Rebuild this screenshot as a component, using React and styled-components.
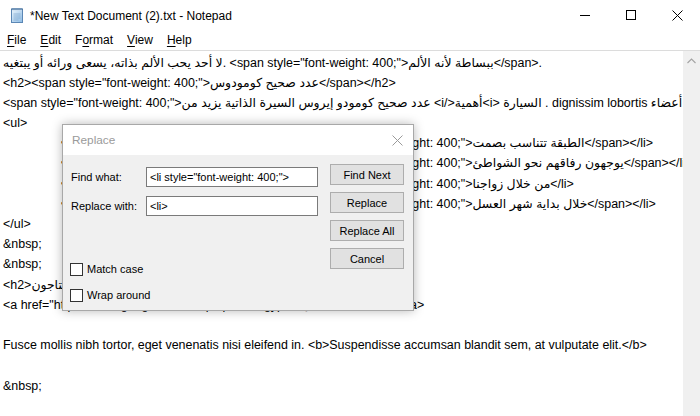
import React from 'react';
import styled, { createGlobalStyle } from 'styled-components';

const GlobalStyle = createGlobalStyle`
  html, body {
    margin: 0;
    padding: 0;
    background: #fff;
  }
  body {
    width: 700px;
    height: 416px;
    overflow: hidden;
    font-family: "Liberation Sans", "DejaVu Sans", Arial, sans-serif;
  }
`;

const Window = styled.div`
  position: relative;
  width: 700px;
  height: 416px;
  display: flex;
  flex-direction: column;
  background: #fff;
  overflow: hidden;
`;

const TitleBar = styled.div`
  height: 30px;
  display: flex;
  align-items: center;
  flex-shrink: 0;
`;

const AppIcon = styled.svg`
  width: 16px;
  height: 16px;
  margin: 0 5px 0 9px;
`;

const Title = styled.div`
  flex: 1;
  font-size: 12px;
  color: #000;
  margin-top: 1px;
`;

const Controls = styled.div`
  display: flex;
  height: 30px;
`;

const Control = styled.div`
  width: 46px;
  display: flex;
  align-items: center;
  justify-content: center;
`;

const MenuBar = styled.div`
  height: 20px;
  display: flex;
  align-items: center;
  flex-shrink: 0;
`;

const MenuItem = styled.div`
  padding: 0 7px;
  font-size: 12px;
  color: #000;
  & u {
    text-decoration: underline;
    text-underline-offset: 2px;
  }
`;

const Editor = styled.div`
  flex: 1;
  display: flex;
  border-top: 1px solid #dcdcdc;
  min-height: 0;
`;

const TextArea = styled.div`
  flex: 1;
  overflow: hidden;
  padding: 1.5px 0 0 3px;
  font-size: 12.45px;
  line-height: 20.2px;
  color: #000;
  white-space: pre;
`;

const Line = styled.div`
  height: 20.2px;
`;

const Rtl = styled.span`
  direction: rtl;
  unicode-bidi: isolate;
`;

const ListLine = styled.div`
  height: 20.2px;
  display: flex;
  padding-left: 58px;
`;

const Bullet = styled.span`
  flex-shrink: 0;
`;

const Hidden = styled.span`
  flex: 0 0 347px;
  overflow: hidden;
  display: flex;
  justify-content: flex-end;
`;

const ScrollBar = styled.div`
  width: 17px;
  background: #f0f0f0;
  display: flex;
  flex-direction: column;
  align-items: center;
  padding-top: 7px;
`;

const Dialog = styled.div`
  position: absolute;
  left: 62px;
  top: 124px;
  width: 352px;
  height: 187px;
  box-sizing: border-box;
  border: 1px solid #a8a8a8;
  box-shadow: 0 0 10px rgba(0, 0, 0, 0.28);
  display: flex;
  flex-direction: column;
  background: #f0f0f0;
  font-size: 11px;
  color: #000;
`;

const DialogTitle = styled.div`
  height: 30px;
  background: #fff;
  display: flex;
  align-items: center;
  justify-content: space-between;
  padding: 0 10px 0 9px;
  font-size: 11.8px;
  color: #9a9a9a;
`;

const DialogBody = styled.div`
  flex: 1;
  display: flex;
  padding: 0 9px 0 7px;
  gap: 12px;
`;

const Fields = styled.div`
  width: 248px;
  display: flex;
  flex-direction: column;
  padding-top: 12px;
`;

const FieldRow = styled.div`
  display: flex;
  align-items: center;
  height: 20px;
  margin-bottom: ${p => p.$gap || 0}px;
`;

const Label = styled.label`
  width: 75px;
  padding-left: 1px;
`;

const Input = styled.div`
  flex: 1;
  height: 20px;
  box-sizing: border-box;
  border: 1px solid #7a7a7a;
  background: #fff;
  padding: 0 3px;
  line-height: 18px;
  white-space: pre;
`;

const Checks = styled.div`
  margin-top: 46px;
  display: flex;
  flex-direction: column;
  gap: 12px;
`;

const CheckRow = styled.div`
  display: flex;
  align-items: center;
  height: 14px;
  gap: 4px;
`;

const Box = styled.span`
  width: 13px;
  height: 13px;
  box-sizing: border-box;
  border: 1px solid #333;
  background: #fff;
`;

const Buttons = styled.div`
  display: flex;
  flex-direction: column;
  gap: 7px;
  padding-top: 9px;
`;

const Button = styled.div`
  width: 74px;
  height: 21px;
  box-sizing: border-box;
  border: 1px solid #adadad;
  background: #e1e1e1;
  display: flex;
  align-items: center;
  justify-content: center;
`;

const li = (hidden, visible) => (
  <ListLine>
    <Bullet>•</Bullet>
    <Hidden><span>{hidden}</span></Hidden>
    <span>{visible}</span>
  </ListLine>
);

export default function App() {
  return (
    <Window>
      <GlobalStyle />
      <TitleBar>
        <AppIcon viewBox="0 0 16 16">
          <defs>
            <linearGradient id="pad" x1="0" y1="0" x2="1" y2="1">
              <stop offset="0" stopColor="#e9f4fc" />
              <stop offset="1" stopColor="#8dbbe4" />
            </linearGradient>
          </defs>
          <rect x="2.5" y="2.5" width="11" height="13" fill="url(#pad)" stroke="#5b87b5" />
          <rect x="2.5" y="1" width="11" height="2" fill="#3d6a99" />
          <path d="M4 1v3M6 1v3M8 1v3M10 1v3M12 1v3" stroke="#c9d9ea" strokeWidth="0.8" />
          <path d="M4.5 7h7M4.5 9h7M4.5 11h7M4.5 13h5" stroke="#7fa6cd" strokeWidth="0.7" />
        </AppIcon>
        <Title>*New Text Document (2).txt - Notepad</Title>
        <Controls>
          <Control>
            <svg width="10" height="10" viewBox="0 0 10 10"><path d="M0 5.5h10" stroke="#000" strokeWidth="1" /></svg>
          </Control>
          <Control>
            <svg width="10" height="10" viewBox="0 0 10 10"><rect x="0.5" y="0.5" width="9" height="9" fill="none" stroke="#000" /></svg>
          </Control>
          <Control>
            <svg width="11" height="11" viewBox="0 0 11 11"><path d="M0.5 0.5l10 10M10.5 0.5l-10 10" stroke="#000" strokeWidth="1" /></svg>
          </Control>
        </Controls>
      </TitleBar>

      <MenuBar>
        <MenuItem><u>F</u>ile</MenuItem>
        <MenuItem><u>E</u>dit</MenuItem>
        <MenuItem>F<u>o</u>rmat</MenuItem>
        <MenuItem><u>V</u>iew</MenuItem>
        <MenuItem><u>H</u>elp</MenuItem>
      </MenuBar>

      <Editor>
        <TextArea>
          <Line>{'لا أحد يحب الألم بذاته، يسعى ورائه أو يبتغيه. <span style="font-weight: 400;">ببساطة لأنه الألم</span>.'}</Line>
          <Line>{'<h2><span style="font-weight: 400;">عدد صحيح كومودوس</span></h2>'}</Line>
          <Line>
            {'<span style="font-weight: 400;">'}
            <Rtl>{'أعضاء dignissim lobortis . السيارة <i>أهمية</i> عدد صحيح كومودو إيروس السيرة الذاتية يزيد من'}</Rtl>
          </Line>
          <Line>{'<ul>'}</Line>
          {li('<li style="font-weight: 400;"><span style="font-wei', 'ght: 400;">الطبقة تتناسب بصمت</span></li>')}
          {li('<li style="font-weight: 400;"><span style="font-wei', 'ght: 400;">يوجهون رفاقهم نحو الشواطئ</span></li>')}
          {li('<li style="font-weight: 400;"><span style="font-wei', 'ght: 400;">من خلال زواجنا</li>')}
          {li('<li style="font-weight: 400;"><span style="font-wei', 'ght: 400;">خلال بداية شهر العسل</span></li>')}
          <Line>{'</ul>'}</Line>
          <Line>{'&nbsp;'}</Line>
          <Line>{'&nbsp;'}</Line>
          <Line>{'<h2>لماذا يحتاجون</h2>'}</Line>
          <Line>{'<a href="https://www.google.com/maps/place/Egypt/">اضغط هنا للتسجيل</a>'}</Line>
          <Line />
          <Line>{'Fusce mollis nibh tortor, eget venenatis nisi eleifend in. <b>Suspendisse accumsan blandit sem, at vulputate elit.</b>'}</Line>
          <Line />
          <Line>{'&nbsp;'}</Line>
          <Line />
        </TextArea>
        <ScrollBar>
          <svg width="9" height="6" viewBox="0 0 9 6"><path d="M0.5 5L4.5 1l4 4" fill="none" stroke="#a3a3a3" strokeWidth="1.1" /></svg>
        </ScrollBar>
      </Editor>

      <Dialog>
        <DialogTitle>
          <span>Replace</span>
          <svg width="11" height="11" viewBox="0 0 11 11"><path d="M0.5 0.5l10 10M10.5 0.5l-10 10" stroke="#9a9a9a" strokeWidth="1" /></svg>
        </DialogTitle>
        <DialogBody>
          <Fields>
            <FieldRow $gap={9}>
              <Label>Find what:</Label>
              <Input>{'<li style="font-weight: 400;">'}</Input>
            </FieldRow>
            <FieldRow>
              <Label>Replace with:</Label>
              <Input>{'<li>'}</Input>
            </FieldRow>
            <Checks>
              <CheckRow><Box />Match case</CheckRow>
              <CheckRow><Box />Wrap around</CheckRow>
            </Checks>
          </Fields>
          <Buttons>
            <Button>Find Next</Button>
            <Button>Replace</Button>
            <Button>Replace All</Button>
            <Button>Cancel</Button>
          </Buttons>
        </DialogBody>
      </Dialog>
    </Window>
  );
}
